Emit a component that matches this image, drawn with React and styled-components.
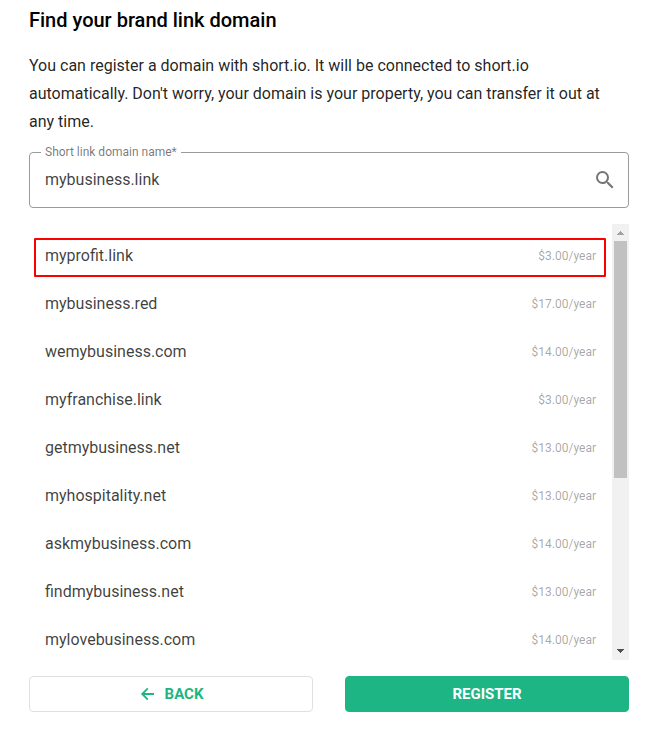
import React, { useState } from "react";
import styled, { createGlobalStyle, ThemeProvider } from "styled-components";
import { MdSearch } from "react-icons/md";

const theme = {
  primary: "#1db584",
  highlight: "#fe0000",
  border: "#e0e0e0",
  outline: "#9a9a9a",
  scrollTrack: "#f1f1f1",
  scrollThumb: "#c1c1c1",
  text: "rgba(0, 0, 0, 0.87)",
  item: "rgba(0, 0, 0, 0.76)",
  muted: "rgba(0, 0, 0, 0.54)",
  hint: "rgba(0, 0, 0, 0.36)"
};

const GlobalStyle = createGlobalStyle`
  *, *::before, *::after {
    box-sizing: border-box;
  }
  body {
    margin: 0;
    background: #fff;
    font-family: Roboto, sans-serif;
  }
`;

const Page = styled.main`
  padding: 4px 40px 20px 29px;
  color: ${props => props.theme.text};
`;

const Title = styled.h1`
  margin: 0 0 16px;
  font-size: 20px;
  font-weight: 500;
  line-height: 32px;
  color: #000;
`;

const Description = styled.p`
  margin: 0 0 16px;
  padding-right: 16px;
  font-size: 16px;
  line-height: 28px;
`;

const Form = styled.form`
  display: flex;
  flex-direction: column;
  gap: 16px;
`;

const Field = styled.div`
  position: relative;
  display: flex;
  align-items: center;
  height: 56px;
  padding: 0 11px 0 15px;
  border: 1px solid ${props => props.theme.outline};
  border-radius: 4px;
`;

const FieldLabel = styled.label`
  position: absolute;
  top: -9px;
  left: 11px;
  padding: 0 4px;
  background: #fff;
  color: ${props => props.theme.muted};
  font-size: 12px;
  line-height: 16px;
`;

const FieldInput = styled.input`
  flex: 1;
  min-width: 0;
  padding: 0;
  border: 0;
  outline: 0;
  background: transparent;
  color: ${props => props.theme.item};
  font-family: inherit;
  font-size: 16px;
  line-height: 28px;
`;

const IconButton = styled.button`
  display: flex;
  padding: 0;
  border: 0;
  background: transparent;
  color: #757575;
  font-size: 24px;
  cursor: pointer;
`;

const ListPanel = styled.div`
  display: flex;
  height: 436px;
`;

const DomainList = styled.ul`
  flex: 1;
  min-width: 0;
  margin: 0;
  padding: 8px 0 0;
  list-style: none;
  overflow: hidden;
`;

const Domain = styled.button`
  position: relative;
  display: flex;
  align-items: center;
  justify-content: space-between;
  width: 100%;
  height: 48px;
  padding: 0 16px;
  border: 0;
  background: transparent;
  color: ${props => props.theme.item};
  font-family: inherit;
  font-size: 16px;
  line-height: 28px;
  cursor: pointer;

  &::after {
    content: "";
    display: ${props => (props.$selected ? "block" : "none")};
    position: absolute;
    inset: 6px 6px 3px 5px;
    border: 2px solid ${props => props.theme.highlight};
    border-radius: 1px;
  }
`;

const Price = styled.span`
  color: ${props => props.theme.hint};
  font-size: 12px;
`;

const ScrollBar = styled.div`
  display: flex;
  flex-direction: column;
  width: 17px;
  background: ${props => props.theme.scrollTrack};
`;

const ScrollButton = styled.button`
  display: flex;
  width: 17px;
  height: 17px;
  padding: 0;
  border: 0;
  background: transparent;
  color: ${props => (props.disabled ? "#a3a3a3" : "#505050")};
`;

const ScrollTrack = styled.div`
  flex: 1;
  padding: 0 2px;
`;

const ScrollThumb = styled.div`
  height: 59%;
  background: ${props => props.theme.scrollThumb};
`;

const Actions = styled.div`
  display: grid;
  grid-template-columns: 1fr 1fr;
  gap: 32px;
`;

const Button = styled.button`
  display: flex;
  align-items: center;
  justify-content: center;
  gap: 8px;
  height: 36px;
  padding: 0 16px;
  border: 1px solid
    ${props => (props.$filled ? props.theme.primary : props.theme.border)};
  border-radius: 4px;
  background: ${props => (props.$filled ? props.theme.primary : "#fff")};
  color: ${props => (props.$filled ? "#fff" : props.theme.primary)};
  font-family: inherit;
  font-size: 15px;
  font-weight: 700;
  line-height: 20px;
  text-transform: uppercase;
  cursor: pointer;
`;

const domains = [
  { name: "myprofit.link", price: 3 },
  { name: "mybusiness.red", price: 17 },
  { name: "wemybusiness.com", price: 14 },
  { name: "myfranchise.link", price: 3 },
  { name: "getmybusiness.net", price: 13 },
  { name: "myhospitality.net", price: 13 },
  { name: "askmybusiness.com", price: 14 },
  { name: "findmybusiness.net", price: 13 },
  { name: "mylovebusiness.com", price: 14 }
];

const BackIcon = () => (
  <svg
    width="18"
    height="18"
    viewBox="0 0 18 18"
    fill="none"
    stroke="currentColor"
    strokeWidth="1.8"
    aria-hidden="true"
  >
    <path d="M15 9H3.6M8.8 3.4L3.2 9l5.6 5.6" />
  </svg>
);

const DomainRow = ({ domain, isSelected, onSelect }) => (
  <li>
    <Domain
      type="button"
      $selected={isSelected}
      aria-pressed={isSelected}
      onClick={() => onSelect(domain.name)}
    >
      <span>{domain.name}</span>
      <Price>{`$${domain.price.toFixed(2)}/year`}</Price>
    </Domain>
  </li>
);

const ListScrollBar = () => (
  <ScrollBar>
    <ScrollButton type="button" aria-label="Scroll up" disabled>
      <svg width="17" height="17" fill="currentColor" shapeRendering="crispEdges">
        <path d="M8 7h1v1h1v1h1v1h1v1H5v-1h1V9h1V8h1z" />
      </svg>
    </ScrollButton>
    <ScrollTrack>
      <ScrollThumb />
    </ScrollTrack>
    <ScrollButton type="button" aria-label="Scroll down">
      <svg width="17" height="17" fill="currentColor" shapeRendering="crispEdges">
        <path d="M5 6h7v1h-1v1h-1v1H9v1H8V9H7V8H6V7H5z" />
      </svg>
    </ScrollButton>
  </ScrollBar>
);

const App = () => {
  const [query, setQuery] = useState("mybusiness.link");
  const [selected, setSelected] = useState("myprofit.link");

  return (
    <ThemeProvider theme={theme}>
      <GlobalStyle />
      <Page>
        <Title>Find your brand link domain</Title>
        <Description>
          You can register a domain with short.io. It will be connected to
          short.io automatically. Don't worry, your domain is your property, you
          can transfer it out at any time.
        </Description>
        <Form onSubmit={event => event.preventDefault()}>
          <Field>
            <FieldLabel htmlFor="domain">Short link domain name*</FieldLabel>
            <FieldInput
              id="domain"
              type="text"
              value={query}
              onChange={event => setQuery(event.target.value)}
            />
            <IconButton type="button" aria-label="Search">
              <MdSearch />
            </IconButton>
          </Field>
          <ListPanel>
            <DomainList>
              {domains.map(domain => (
                <DomainRow
                  key={domain.name}
                  domain={domain}
                  isSelected={domain.name === selected}
                  onSelect={setSelected}
                />
              ))}
            </DomainList>
            <ListScrollBar />
          </ListPanel>
          <Actions>
            <Button type="button">
              <BackIcon />
              Back
            </Button>
            <Button type="submit" $filled>
              Register
            </Button>
          </Actions>
        </Form>
      </Page>
    </ThemeProvider>
  );
};

export default App;
